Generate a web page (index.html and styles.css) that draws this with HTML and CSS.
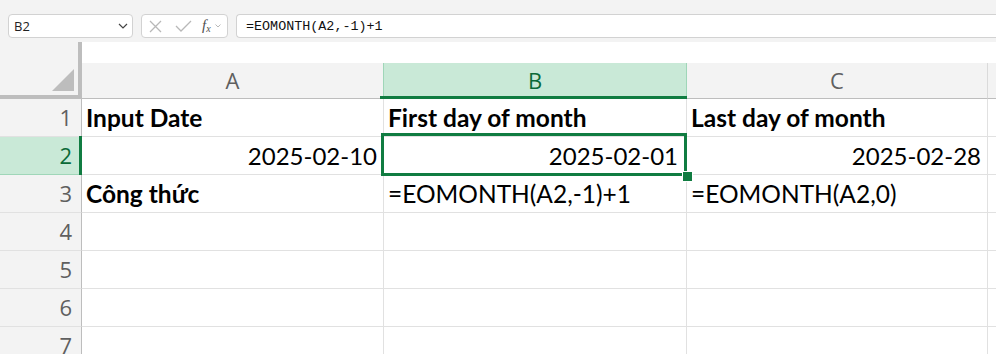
FILE: index.html
```html
<!DOCTYPE html>
<html lang="vi">
<head>
    <meta charset="UTF-8">
    <title>EOMONTH</title>
    <link rel="stylesheet" href="styles.css">
</head>
<body>
    <div class="toolbar">
        <div class="namebox">
            <span>B2</span>
            <svg class="chev" width="10" height="6" viewBox="0 0 10 6"><path d="M1 1l4 4 4-4" fill="none" stroke="#444" stroke-width="1.2"/></svg>
        </div>
        <div class="fxbox">
            <svg width="13" height="13" viewBox="0 0 13 13"><path d="M1 1l11 11M12 1L1 12" fill="none" stroke="#b8b8b8" stroke-width="1.3"/></svg>
            <svg width="17" height="12" viewBox="0 0 17 12"><path d="M1 6l5 5L16 1" fill="none" stroke="#b8b8b8" stroke-width="1.3"/></svg>
            <span class="fx">f<sub>x</sub></span>
            <svg width="6" height="4" viewBox="0 0 6 4"><path d="M0.5 0.5l2.5 2.5 2.5-2.5" fill="none" stroke="#b8b8b8" stroke-width="1"/></svg>
        </div>
        <div class="formula">=EOMONTH(A2,-1)+1</div>
    </div>

    <div class="sheet">
        <div class="corner"><div class="tri"></div></div>
        <div class="colhead near">A</div>
        <div class="colhead sel">B</div>
        <div class="colhead">C</div>
        <div class="colhead last"></div>

        <div class="rowhead">1</div>
        <div class="cell bold">Input Date</div>
        <div class="cell bold">First day of month</div>
        <div class="cell bold">Last day of month</div>
        <div class="cell"></div>

        <div class="rowhead sel">2</div>
        <div class="cell num">2025-02-10</div>
        <div class="cell num active">2025-02-01</div>
        <div class="cell num">2025-02-28</div>
        <div class="cell"></div>

        <div class="rowhead">3</div>
        <div class="cell bold">Công thức</div>
        <div class="cell">=EOMONTH(A2,-1)+1</div>
        <div class="cell">=EOMONTH(A2,0)</div>
        <div class="cell"></div>

        <div class="rowhead">4</div>
        <div class="cell"></div>
        <div class="cell"></div>
        <div class="cell"></div>
        <div class="cell"></div>

        <div class="rowhead">5</div>
        <div class="cell"></div>
        <div class="cell"></div>
        <div class="cell"></div>
        <div class="cell"></div>

        <div class="rowhead">6</div>
        <div class="cell"></div>
        <div class="cell"></div>
        <div class="cell"></div>
        <div class="cell"></div>

        <div class="rowhead">7</div>
        <div class="cell"></div>
        <div class="cell"></div>
        <div class="cell"></div>
        <div class="cell"></div>
    </div>
</body>
</html>
```

FILE: styles.css
```css
* {
    box-sizing: border-box;
}
body {
    margin: 0;
    background: #f3f3f3;
    font-family: "Open Sans", sans-serif;
    overflow: hidden;
}
.toolbar {
    height: 42px;
    display: flex;
    align-items: flex-start;
    gap: 8px;
    padding: 14px 0 0 8px;
}
.namebox, .fxbox, .formula {
    height: 24px;
    background: #fff;
    border: 1px solid #d2d2d2;
    display: flex;
    align-items: center;
}
.namebox {
    width: 125px;
    border-radius: 4px;
    padding: 0 4px 0 5px;
    justify-content: space-between;
    font-size: 13px;
    color: #222;
}
.fxbox {
    width: 87px;
    border-radius: 4px;
    padding: 0 0 0 7px;
    gap: 0;
}
.fxbox svg:nth-child(2) {
    margin-left: 13px;
}
.fx {
    font-family: "Liberation Serif", serif;
    font-style: italic;
    font-size: 15px;
    color: #505050;
    margin-left: 10px;
    margin-right: 4px;
    line-height: 1;
}
.fx sub {
    font-size: 10px;
    vertical-align: -2px;
}
.formula {
    flex: 1;
    border-right: none;
    border-radius: 4px 0 0 4px;
    padding-left: 9px;
    font-family: "Liberation Mono", monospace;
    font-size: 13.4px;
    color: #111;
}
.sheet {
    display: grid;
    grid-template-columns: 82px 302px 303px 301px 1fr;
    grid-template-rows: 57px;
    grid-auto-rows: 38px;
    background: #fff;
}
.corner {
    background: #f3f3f3;
    border-right: 4px solid #bdbdbd;
    border-bottom: 4px solid #bdbdbd;
    position: relative;
}
.tri {
    position: absolute;
    right: 4px;
    bottom: 4px;
    width: 22px;
    height: 22px;
    background: #bdbdbd;
    clip-path: polygon(100% 0, 100% 100%, 0 100%);
}
.colhead {
    margin-top: 21px;
    background: #f3f3f3;
    border-right: 1px solid #dadada;
    border-bottom: 1px solid #bdbdbd;
    text-align: center;
    font-size: 22px;
    line-height: 35px;
    color: #5f5f5f;
    position: relative;
}
.colhead.near {
    border-right-color: #9fd6b8;
}
.colhead.sel {
    background: #c9e9d7;
    color: #0b6a38;
    border-right-color: #9fd6b8;
}
.colhead.sel::after {
    content: "";
    position: absolute;
    left: -4px;
    right: -2px;
    bottom: -1px;
    height: 3px;
    background: #107c41;
}
.colhead.last {
    border-right: none;
}
.rowhead {
    background: #f3f3f3;
    border-right: 1px solid #bdbdbd;
    border-bottom: 1px solid #e1e1e1;
    text-align: right;
    padding-right: 9px;
    font-size: 22px;
    line-height: 37px;
    color: #5f5f5f;
    position: relative;
}
.rowhead.sel {
    background: #c9e9d7;
    color: #0b6a38;
    border-bottom-color: #9fd6b8;
}
.rowhead.sel::after {
    content: "";
    position: absolute;
    right: -1px;
    top: -1px;
    bottom: -1px;
    width: 3px;
    background: #107c41;
}
.cell {
    border-right: 1px solid #e1e1e1;
    border-bottom: 1px solid #e1e1e1;
    padding: 0 6px 0 4px;
    font-family: "Lato", "Noto Sans", sans-serif;
    font-size: 24.5px;
    line-height: 37px;
    color: #000;
    white-space: nowrap;
}
.cell.bold {
    font-weight: bold;
}
.cell.num {
    text-align: right;
    font-size: 24px;
}
.cell.active {
    position: relative;
    padding-right: 8px;
}
.cell.active::before {
    content: "";
    position: absolute;
    left: -3px;
    top: -4px;
    right: -1px;
    bottom: -2px;
    border: 3px solid #107c41;
}
.cell.active::after {
    content: "";
    position: absolute;
    left: 298px;
    top: 34px;
    width: 9px;
    height: 9px;
    background: #107c41;
    border: 1px solid #fff;
}
```
